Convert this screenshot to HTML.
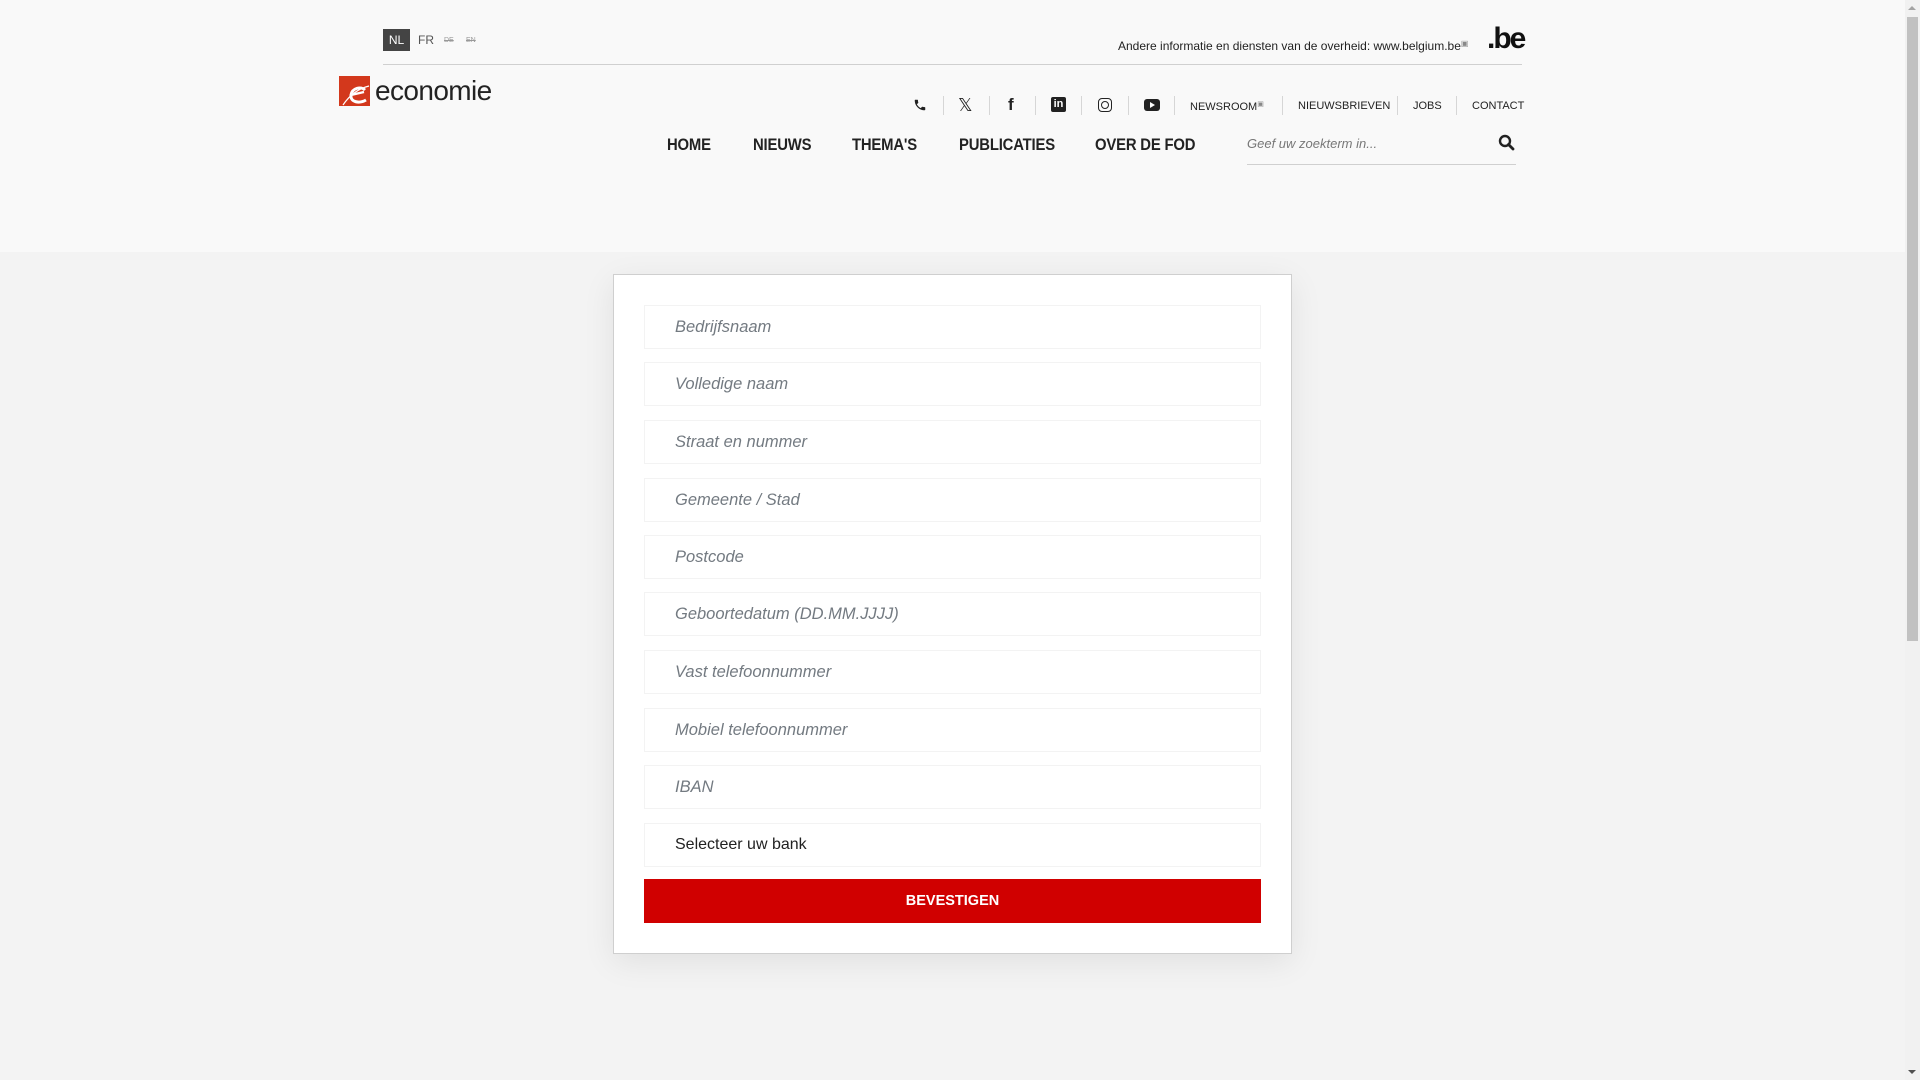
<!DOCTYPE html>
<html><head><meta charset="utf-8"><style>
*{margin:0;padding:0;box-sizing:border-box}
body{width:1920px;height:1080px;overflow:hidden;background:#f3f3f3;font-family:"Liberation Sans",sans-serif;position:relative;color:#222}
.a{position:absolute}
#hdr{left:0;top:0;width:1905px;height:252px;background:#f9f9f9}
.sep{position:absolute;top:96px;width:1px;height:19px;background:#d6d6d6}
.tl{position:absolute;top:100px;font-size:11px;color:#222;white-space:nowrap}
.nav{position:absolute;top:136px;font-size:16.5px;font-weight:bold;color:#222;letter-spacing:-0.2px;transform:scaleX(.9);transform-origin:left}
.inp{position:absolute;left:644px;width:617px;height:44px;background:#fff;border:1px solid #f3f3f3;font-size:16.5px;font-style:italic;color:#737a81;padding-left:30px;line-height:42px}
</style></head><body>
<div id="hdr" class="a"></div>
<div class="a" style="left:383px;top:29px;width:27px;height:22px;background:#444;color:#fff;font-size:12px;line-height:22px;text-align:center">NL</div>
<div class="a" style="left:418px;top:33px;font-size:12px;color:#555">FR</div>
<div class="a" style="left:444px;top:37px;font-size:7px;color:#999;text-decoration:line-through">DE</div>
<div class="a" style="left:466px;top:37px;font-size:7px;color:#999;text-decoration:line-through">EN</div>
<div class="a" style="left:1118px;top:39px;font-size:12px;color:#222;white-space:nowrap">Andere informatie en diensten van de overheid: www.belgium.be<span style="font-size:8px;color:#888;vertical-align:4px">&#9635;</span></div>
<div class="a" style="left:1487px;top:22px;font-size:30px;font-weight:bold;letter-spacing:-2px;color:#111">.be</div>
<div class="a" style="left:383px;top:64px;width:1139px;height:1px;background:#d0d0d0"></div>
<svg class="a" style="left:339px;top:76px" width="31" height="30" viewBox="0 0 31 30"><rect width="31" height="30" fill="#d3381c"/><path d="M4 29 C10 20 18 13 30 10" stroke="#fff" stroke-width="1.2" fill="none"/><path d="M26 14 C22 10 13 12 12 19 C11 26 20 28 27 24" stroke="#fff" stroke-width="3" fill="none"/><path d="M12 19 L25 16" stroke="#fff" stroke-width="2.4"/></svg>
<div class="a" style="left:375px;top:75px;font-size:28px;color:#222;letter-spacing:-0.6px">economie</div>
<svg class="a" style="left:913px;top:98px" width="14" height="14" viewBox="0 0 24 24"><path d="M6.6 10.8c1.4 2.8 3.8 5.1 6.6 6.6l2.2-2.2c.3-.3.7-.4 1-.2 1.1.4 2.3.6 3.6.6.6 0 1 .4 1 1V20c0 .6-.4 1-1 1C10.6 21 3 13.4 3 4c0-.6.4-1 1-1h3.5c.6 0 1 .4 1 1 0 1.3.2 2.5.6 3.6.1.3 0 .7-.2 1z" fill="#222"/></svg>
<div class="sep" style="left:943px"></div>
<div class="a" style="left:958px;top:95px;font-size:18px;color:#222;font-family:'DejaVu Sans',sans-serif">𝕏</div>
<div class="sep" style="left:989px"></div>
<div class="a" style="left:1008px;top:95px;font-size:17px;font-weight:bold;color:#222">f</div>
<div class="sep" style="left:1035px"></div>
<div class="a" style="left:1051px;top:97px;width:15px;height:15px;background:#222;border-radius:2px;color:#fff;font-size:11px;font-weight:bold;line-height:15px;text-align:center">in</div>
<div class="sep" style="left:1081px"></div>
<div class="a" style="left:1098px;top:98px;width:14px;height:14px;border:1.6px solid #222;border-radius:4px"></div>
<div class="a" style="left:1101px;top:101px;width:8px;height:8px;border:1.6px solid #222;border-radius:50%"></div>
<div class="sep" style="left:1128px"></div>
<div class="a" style="left:1144px;top:99px;width:16px;height:12px;background:#222;border-radius:3px"></div>
<div class="a" style="left:1150px;top:102px;width:0;height:0;border-left:5px solid #fff;border-top:3px solid transparent;border-bottom:3px solid transparent"></div>
<div class="sep" style="left:1174px"></div>
<div class="tl" style="left:1190px">NEWSROOM<span style="font-size:7px;color:#888;vertical-align:4px">&#9635;</span></div>
<div class="sep" style="left:1282px"></div>
<div class="tl" style="left:1298px">NIEUWSBRIEVEN</div>
<div class="sep" style="left:1397px"></div>
<div class="tl" style="left:1413px">JOBS</div>
<div class="sep" style="left:1456px"></div>
<div class="tl" style="left:1472px">CONTACT</div>
<div class="nav" style="left:667px">HOME</div>
<div class="nav" style="left:753px">NIEUWS</div>
<div class="nav" style="left:852px">THEMA'S</div>
<div class="nav" style="left:959px">PUBLICATIES</div>
<div class="nav" style="left:1095px">OVER DE FOD</div>
<div class="a" style="left:1247px;top:136px;font-size:13px;font-style:italic;color:#777">Geef uw zoekterm in...</div>
<svg class="a" style="left:1498px;top:134px" width="17" height="17" viewBox="0 0 17 17"><circle cx="7" cy="7" r="5" stroke="#222" stroke-width="2.4" fill="none"/><path d="M10.5 10.5L15 15" stroke="#222" stroke-width="2.8" stroke-linecap="round"/></svg>
<div class="a" style="left:1247px;top:164px;width:269px;height:1px;background:#d0d0d0"></div>
<div class="a" style="left:613px;top:274px;width:679px;height:680px;background:#fff;border:1px solid #cfcfcf;box-shadow:0 8px 30px rgba(0,0,0,.08)"></div>
<div class="inp" style="top:305px">Bedrijfsnaam</div>
<div class="inp" style="top:362px">Volledige naam</div>
<div class="inp" style="top:420px">Straat en nummer</div>
<div class="inp" style="top:478px">Gemeente / Stad</div>
<div class="inp" style="top:535px">Postcode</div>
<div class="inp" style="top:592px">Geboortedatum (DD.MM.JJJJ)</div>
<div class="inp" style="top:650px">Vast telefoonnummer</div>
<div class="inp" style="top:708px">Mobiel telefoonnummer</div>
<div class="inp" style="top:765px">IBAN</div>
<div class="inp" style="top:823px;font-style:normal;color:#222;font-size:16px">Selecteer uw bank</div>
<div class="a" style="left:644px;top:879px;width:617px;height:44px;background:#d00000;color:#fff;font-weight:bold;font-size:14.5px;text-align:center;line-height:44px">BEVESTIGEN</div>
<div class="a" style="left:1905px;top:0;width:15px;height:1080px;background:#f1f1f1"></div>
<div class="a" style="left:1907px;top:17px;width:11px;height:624px;background:#c1c1c1"></div>
<div class="a" style="left:1908px;top:6px;width:0;height:0;border-bottom:4px solid #a3a3a3;border-left:4px solid transparent;border-right:4px solid transparent"></div>
<div class="a" style="left:1908px;top:1070px;width:0;height:0;border-top:4px solid #505050;border-left:4px solid transparent;border-right:4px solid transparent"></div>
</body></html>
